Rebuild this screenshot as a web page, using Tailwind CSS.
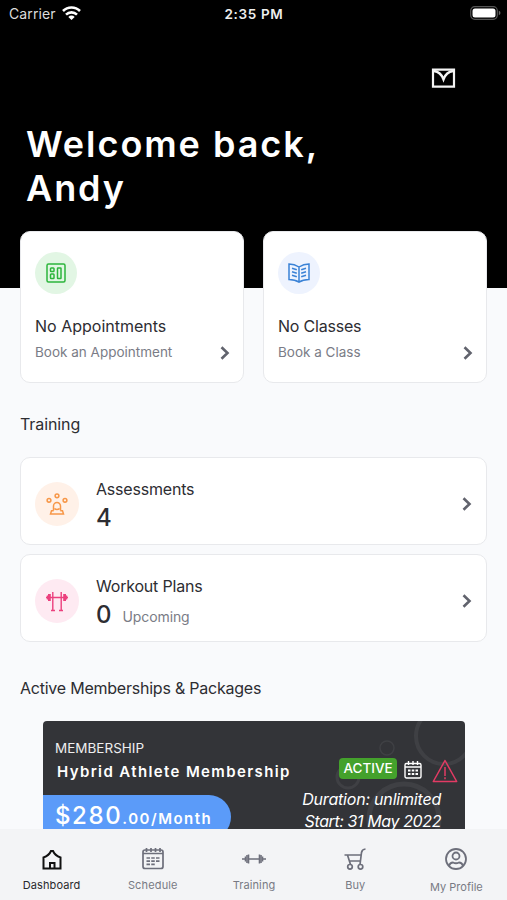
<!DOCTYPE html>
<html lang="en">
<head>
<meta charset="utf-8">
<title>Dashboard</title>
<script src="https://cdn.jsdelivr.net/npm/@tailwindcss/browser@4"></script>
</head>
<body class="bg-[#f9fafc]">
<div class="flex h-[900px] w-[507px] flex-col overflow-hidden bg-[#f9fafc] font-['Inter',sans-serif] text-[#2d2d32]">
  <header class="h-[288px] shrink-0 bg-black text-white">
    <div class="flex h-[28px] items-center pl-[9px] pr-[6px]">
      <div class="flex flex-1 items-center gap-[6px] text-[14px] leading-[28px] text-[#dcdcdc]"><span class="tracking-[0.1px]">Carrier</span>
        <svg class="-mt-[2px] h-[14px] w-[19px]" viewBox="0 0 19 14" fill="none" stroke="#fff" stroke-width="2.6"><path d="M1 5a12 12 0 0 1 17 0M4 8.600a8 8 0 0 1 11 0"/><path d="M9.500 14L6.300 10.900a4.600 4.600 0 0 1 6.400 0z" fill="#fff" stroke="none"/></svg>
      </div>
      <span class="-ml-[2px] text-[13.500px] font-semibold leading-[28px] tracking-[0.65px] text-[#eee]">2:35 PM</span>
      <div class="flex flex-1 justify-end">
        <svg class="-mt-[2px] h-[14px] w-[31px]" viewBox="0 0 31 14"><rect x=".7" y=".7" width="26.600" height="12.600" rx="4" fill="none" stroke="#555" stroke-width="1.200"/><rect x="2.500" y="2.500" width="23" height="9" rx="2.500" fill="#fff"/><path d="M28.800 4.800q1.700.6 1.700 2.200t-1.700 2.200z" fill="#666"/></svg>
      </div>
    </div>
    <div class="flex justify-end pr-[51px] pt-[40px]">
      <svg class="h-[20px] w-[25px]" viewBox="0 0 25 20" fill="none" stroke="#f4f4f4" stroke-width="2.200"><path d="M2 1.600h21v17H2z"/><path d="M3 3c4.500.6 7.500 3 9.500 8.200 2-5.200 5-7.600 9.500-8.200" stroke-width="2.500"/></svg>
    </div>
    <h1 class="pl-[26px] pt-[34px] text-[36px] font-semibold leading-[44px] tracking-[1.950px]">Welcome back,<br>Andy</h1>
  </header>

  <main class="relative -mt-[57px] min-h-0 flex-1 overflow-hidden px-[20px]">
    <div class="grid grid-cols-2 gap-[19px]">
      <section class="flex h-[152px] flex-col rounded-[10px] border border-[#e8e9ec] bg-white pl-[14px] pr-[13px] pt-[20px]">
        <div class="flex h-[42px] w-[42px] items-center justify-center rounded-full bg-[#e2f6e4]">
          <svg class="h-[20px] w-[20px]" viewBox="0 0 20 20" fill="none" stroke="#2db53c" stroke-width="1.500"><rect x="1" y="1" width="18" height="18" rx="1.500"/><rect x="4.500" y="5" width="3.500" height="3.500" rx=".8"/><rect x="4.500" y="11" width="3.500" height="4.500" rx=".8"/><rect x="11.500" y="5" width="3.500" height="10.500" rx=".5"/></svg>
        </div>
        <h2 class="mt-[21px] text-[16px] leading-[22px]">No Appointments</h2>
        <div class="mt-[1px] flex items-center justify-between text-[13.500px] leading-[28px] text-[#7a7c86]"><span>Book an Appointment</span>
          <svg class="mt-[2px] h-[14px] w-[10px]" viewBox="0 0 10 14" fill="none" stroke="#61636d" stroke-width="2.600"><path d="M1.500 1.200L7.500 7l-6 5.800"/></svg></div>
      </section>
      <section class="flex h-[152px] flex-col rounded-[10px] border border-[#e8e9ec] bg-white pl-[14px] pr-[13px] pt-[20px]">
        <div class="flex h-[42px] w-[42px] items-center justify-center rounded-full bg-[#eef3fe]">
          <svg class="h-[20px] w-[22px]" viewBox="0 0 22 20" fill="none" stroke="#3a82d6" stroke-width="1.500"><path d="M1 1q5.500 0 10 3 4.500-3 10-3v15.500q-6 0-10 2.700Q7 16.500 1 16.500zM11 4v15M4 5.200l4.800 1.500M4 8.700l4.800 1.500M4 12.200l4.800 1.500M18 5.200l-4.800 1.500M18 8.700l-4.800 1.500M18 12.200l-4.800 1.500"/></svg>
        </div>
        <h2 class="mt-[21px] text-[16px] leading-[22px] tracking-[-0.2px]">No Classes</h2>
        <div class="mt-[1px] flex items-center justify-between text-[13.500px] leading-[28px] text-[#7a7c86]"><span>Book a Class</span>
          <svg class="mt-[2px] h-[14px] w-[10px]" viewBox="0 0 10 14" fill="none" stroke="#61636d" stroke-width="2.600"><path d="M1.500 1.200L7.500 7l-6 5.800"/></svg></div>
      </section>
    </div>

    <h2 class="mt-[30px] text-[16px] leading-[22px] tracking-[-0.1px]">Training</h2>
    <section class="mt-[22px] flex h-[88px] items-center rounded-[10px] border border-[#e8e9ec] bg-white pl-[14px] pr-[14px]">
      <div class="mt-[5px] flex h-[44px] w-[44px] items-center justify-center rounded-full bg-[#fff1e8]">
        <svg class="h-[22px] w-[22px]" viewBox="0 0 22 22" fill="none" stroke="#f79748" stroke-width="1.500"><circle cx="11" cy="2.800" r="1.900"/><circle cx="3" cy="7.300" r="1.900"/><circle cx="19" cy="7.300" r="1.900"/><path d="M7.500 17.500V13a3.500 3.500 0 0 1 7 0v4.500M8.500 15.500a3.500 3.500 0 0 0 5 0M7.700 17.700H5.500L4.500 21h13l-1-3.300h-2.200"/></svg>
      </div>
      <div class="ml-[17px] flex-1 pt-[9px]"><h3 class="text-[16px] leading-[24px] tracking-[-0.2px]">Assessments</h3><p class="mt-[1px] text-[24px] font-medium leading-[32px]">4</p></div>
      <svg class="mt-[5px] h-[14px] w-[10px]" viewBox="0 0 10 14" fill="none" stroke="#61636d" stroke-width="2.600"><path d="M1.500 1.200L7.500 7l-6 5.800"/></svg>
    </section>
    <section class="mt-[9px] flex h-[88px] items-center rounded-[10px] border border-[#e8e9ec] bg-white pl-[14px] pr-[14px]">
      <div class="mt-[5px] flex h-[44px] w-[44px] items-center justify-center rounded-full bg-[#feeaf2]">
        <svg class="h-[22px] w-[22px]" viewBox="0 0 22 22" fill="none" stroke="#ec407e" stroke-width="1.400"><path d="M0 7.500h22M5 20.500h4M13 20.500h4M6.800 2v18.500M15.200 2v18.500"/><path d="M3.400 4v7M18.600 4v7" stroke-width="2.800"/><path d="M1.500 5.500v4M20.500 5.500v4"/></svg>
      </div>
      <div class="ml-[17px] flex-1 pt-[9px]"><h3 class="text-[16px] leading-[24px] tracking-[-0.2px]">Workout Plans</h3><p class="mt-[1px] flex h-[32px] items-center gap-[11px] leading-[32px]"><span class="text-[24px] font-medium">0</span><span class="mt-[3px] text-[14px] tracking-[-0.1px] text-[#7a7c86]">Upcoming</span></p></div>
      <svg class="mt-[5px] h-[14px] w-[10px]" viewBox="0 0 10 14" fill="none" stroke="#61636d" stroke-width="2.600"><path d="M1.500 1.200L7.500 7l-6 5.800"/></svg>
    </section>

    <h2 class="mt-[35px] text-[16px] leading-[22px] tracking-[-0.23px]">Active Memberships &amp; Packages</h2>
    <section class="relative mt-[22px] ml-[23px] h-[140px] w-[422px] overflow-hidden rounded-[4px] bg-[#333438] text-white">
      <svg class="absolute left-0 top-0 h-[140px] w-[422px]" viewBox="0 0 422 140" fill="none" stroke="#3f4044"><circle cx="401" cy="15" r="28" stroke-width="4"/><circle cx="344" cy="27" r="7" stroke-width="1.500"/><circle cx="305" cy="56" r="11" stroke-width="3"/><circle cx="361" cy="98" r="35" stroke-width="5"/></svg>
      <div class="relative flex justify-between">
        <div class="pt-[17px]">
          <p class="pl-[12px] text-[13.500px] leading-[20px] text-[#eee]">MEMBERSHIP</p>
          <h3 class="pl-[14px] pt-[3px] text-[15px] font-semibold leading-[22px] tracking-[1.370px]">Hybrid Athlete Membership</h3>
          <p class="mt-[12px] flex h-[44px] w-[188px] items-baseline rounded-r-[22px] bg-[#5b9bf9] pl-[12px] font-semibold leading-[41px]"><span class="text-[24px] font-medium tracking-[1.600px]">$280</span><span class="text-[15px] tracking-[1.500px]">.00/Month</span></p>
        </div>
        <div class="pr-[7px] pt-[37px]">
          <div class="flex h-[30px] items-start justify-end">
            <span class="flex h-[21px] w-[58px] items-center justify-center rounded-[4px] bg-[#44a12c] text-[13.500px] font-medium">ACTIVE</span>
            <svg class="ml-[7px] mt-[3px] h-[18px] w-[18px]" viewBox="0 0 18 18" fill="none" stroke="#fff" stroke-width="1.400"><rect x="1" y="2.500" width="16" height="14.500" rx="1.500"/><path d="M1 6h16M4.500 0v4M9 0v4M13.500 0v4"/><path d="M4 9.500h10M4 13h10" stroke-dasharray="2.500 1.250" stroke-width="2"/></svg>
            <svg class="ml-[10px] mt-[1px] h-[24px] w-[26px]" viewBox="0 0 26 24" fill="none" stroke="#e23b64" stroke-width="1.500"><path d="M13 1.500L1.300 22.500h23.400z" stroke-linejoin="round"/><path d="M13 8v9M13 18.200v2"/></svg>
          </div>
          <p class="mr-[17px] text-right text-[16px] italic leading-[22px] tracking-[-0.2px]"><span class="block">Duration: unlimited</span><span class="block tracking-[-0.4px]">Start: 31 May 2022</span></p>
        </div>
      </div>
    </section>
  </main>

  <nav class="grid h-[71px] shrink-0 grid-cols-5 bg-[#f3f4f6] pl-[1px] pt-[18px] text-center text-[11px] leading-[14px] text-[#787a84]">
    <div class="flex flex-col items-center text-[#29292d]"><svg class="h-[24px] w-[24px]" viewBox="0 0 24 24" fill="none" stroke="#111" stroke-width="2"><path d="M3.500 21.500V10.500Q9 8.500 11 4h2q2 4.500 7.500 6.500v11zM10 21.500v-5.500h4.500v5.500"/></svg><span class="mt-[7px] tracking-[0.1px]">Dashboard</span></div>
    <div class="flex flex-col items-center"><svg class="h-[24px] w-[24px]" viewBox="0 0 24 24" fill="none" stroke="#6d6f7b" stroke-width="1.700"><rect x="2" y="3" width="20" height="18.500" rx="2"/><path d="M2 6.500h20M5.500 1v4M10 1v4M14.500 1v4M19 1v4"/><path d="M5.500 11h13M5.500 14.200h13M5.500 17.400h9" stroke-dasharray="3.500 1.250"/></svg><span class="mt-[7px] tracking-[0.15px]">Schedule</span></div>
    <div class="flex flex-col items-center"><svg class="h-[24px] w-[24px]" viewBox="0 0 24 24" fill="none" stroke="#6d6f7b" stroke-width="1.600"><path d="M0 12h3M7 12h10M21 12h3M6.500 7.500v9M17.500 7.500v9M3.500 9.500v5M20.500 9.500v5"/><path d="M5 8v8M19 8v8"/></svg><span class="mt-[7px] tracking-[0.1px]">Training</span></div>
    <div class="flex flex-col items-center"><svg class="h-[24px] w-[24px]" viewBox="0 0 24 24" fill="none" stroke="#6d6f7b" stroke-width="1.700"><path d="M22.500 2q-3.500.3-4 3.500L17 17.500M7.500 17.500L4.500 8H1.500M4.500 8h13.500M6.500 14h11"/><circle cx="7" cy="19.800" r="2.300"/><circle cx="17.500" cy="19.800" r="2.300"/></svg><span class="mt-[7px]">Buy</span></div>
    <div class="flex flex-col items-center"><svg class="h-[24px] w-[24px]" viewBox="0 0 24 24" fill="none" stroke="#6d6f7b" stroke-width="1.800"><circle cx="12" cy="12" r="10"/><circle cx="12" cy="9" r="3.500"/><path d="M5 19q1-3.500 4-3.500 3 1.500 6 0 3 0 4 3.500"/></svg><span class="mt-[9px]">My Profile</span></div>
  </nav>
</div>
</body>
</html>
